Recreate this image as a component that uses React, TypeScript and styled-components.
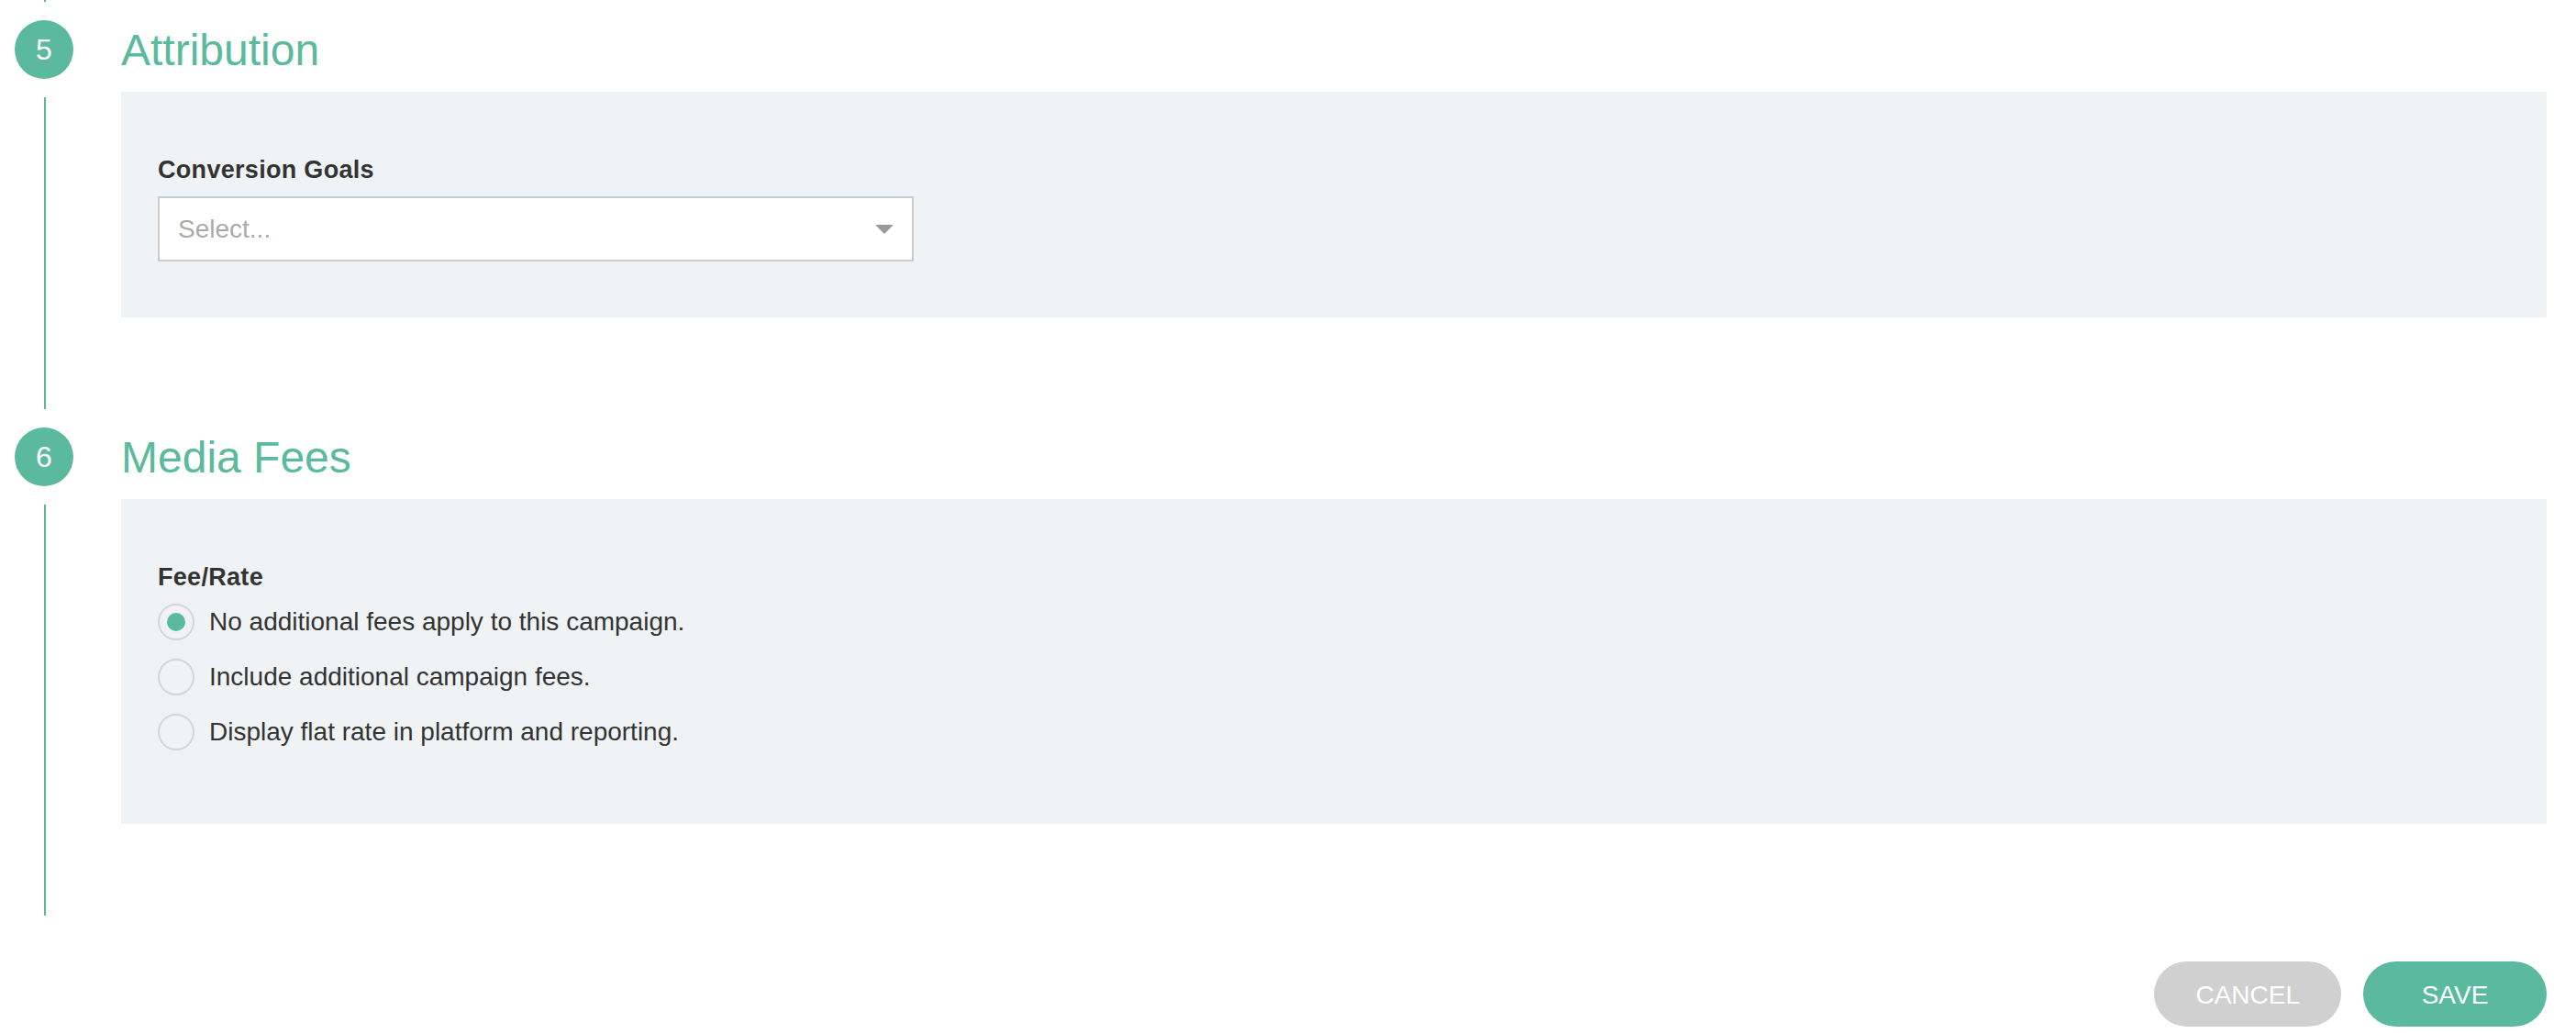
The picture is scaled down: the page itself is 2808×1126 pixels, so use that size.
import React from 'react';
import { useState } from 'react';
import styled, { createGlobalStyle } from 'styled-components';

const green = '#5bba9d';

const GlobalStyle = createGlobalStyle`
  body {
    margin: 0;
    background: #ffffff;
    font-family: "Liberation Sans", Arial, Helvetica, sans-serif;
    color: #333333;
  }
`

const Page = styled.div`
  padding-right: 32px;
`

const TopRail = styled.div`
  width: 2px;
  height: 2px;
  margin: 0 0 20px 48px;
  background: ${green};
`

const Step = styled.section`
  display: grid;
  grid-template-columns: 96px 1fr;
  column-gap: 36px;
`

const Badge = styled.div`
  width: 64px;
  height: 64px;
  margin-left: 16px;
  border-radius: 50%;
  background: ${green};
  color: #ffffff;
  font-size: 32px;
  line-height: 64px;
  text-align: center;
`

const Title = styled.h2`
  margin: 0;
  padding-top: 2px;
  align-self: center;
  font-size: 48px;
  line-height: 1;
  font-weight: 400;
  color: ${green};
`

const Rail = styled.div`
  width: 2px;
  margin: 20px 0 20px 48px;
  background: ${green};
`

const Body = styled.div`
  padding: 14px 0 120px;
`

const Panel = styled.div<{ $bottom: number }>`
  background: #eff3f6;
  padding: 70px 40px ${p => p.$bottom}px;
`

const FieldLabel = styled.div<{ $gap: number }>`
  font-size: 27px;
  line-height: 30px;
  font-weight: 700;
  letter-spacing: 0.3px;
  color: #333333;
  margin-bottom: ${p => p.$gap}px;
`

const Select = styled.div`
  box-sizing: border-box;
  width: 824px;
  height: 71px;
  border: 2px solid #cccccc;
  background: #ffffff;
  display: flex;
  align-items: center;
  justify-content: space-between;
  padding: 0 20px;
  cursor: pointer;
`

const Placeholder = styled.span`
  font-size: 28px;
  color: #aaaaaa;
`

const Caret = styled.span`
  width: 0;
  height: 0;
  border-left: 10px solid transparent;
  border-right: 10px solid transparent;
  border-top: 10px solid #999999;
`

const RadioList = styled.div`
  display: flex;
  flex-direction: column;
`

const RadioRow = styled.label`
  display: flex;
  align-items: center;
  height: 60px;
  gap: 16px;
  font-size: 28px;
  color: #333333;
  cursor: pointer;
`

const RadioCircle = styled.span<{ $checked: boolean }>`
  box-sizing: border-box;
  width: 40px;
  height: 40px;
  border-radius: 50%;
  border: 2px solid #d6d6d6;
  display: flex;
  align-items: center;
  justify-content: center;

  &::after {
    content: '';
    width: 20px;
    height: 20px;
    border-radius: 50%;
    background: ${p => (p.$checked ? green : 'transparent')};
  }
`

const Footer = styled.div`
  display: flex;
  justify-content: flex-end;
  gap: 24px;
  padding-top: 30px;
`

const PillButton = styled.button<{ $primary?: boolean }>`
  box-sizing: border-box;
  height: 71px;
  min-width: 200px;
  padding: 3px 45px 0;
  border: none;
  border-radius: 36px;
  background: ${p => (p.$primary ? green : '#d0d0d0')};
  color: #ffffff;
  font-family: inherit;
  font-size: 28px;
  text-transform: uppercase;
  cursor: pointer;
`

const feeOptions = [
  'No additional fees apply to this campaign.',
  'Include additional campaign fees.',
  'Display flat rate in platform and reporting.',
];

export default function App() {
  const [fee, setFee] = useState(0);

  return (
    <Page>
      <GlobalStyle />
      <TopRail />

      <Step>
        <Badge>5</Badge>
        <Title>Attribution</Title>
        <Rail />
        <Body>
          <Panel $bottom={61}>
            <FieldLabel $gap={14}>Conversion Goals</FieldLabel>
            <Select>
              <Placeholder>Select...</Placeholder>
              <Caret />
            </Select>
          </Panel>
        </Body>
      </Step>

      <Step>
        <Badge>6</Badge>
        <Title>Media Fees</Title>
        <Rail />
        <Body>
          <Panel $bottom={70}>
            <FieldLabel $gap={4}>Fee/Rate</FieldLabel>
            <RadioList>
              {feeOptions.map((text, i) => (
                <RadioRow key={text} onClick={() => setFee(i)}>
                  <RadioCircle $checked={fee === i} />
                  {text}
                </RadioRow>
              ))}
            </RadioList>
          </Panel>
        </Body>
      </Step>

      <Footer>
        <PillButton>Cancel</PillButton>
        <PillButton $primary>Save</PillButton>
      </Footer>
    </Page>
  );
}
